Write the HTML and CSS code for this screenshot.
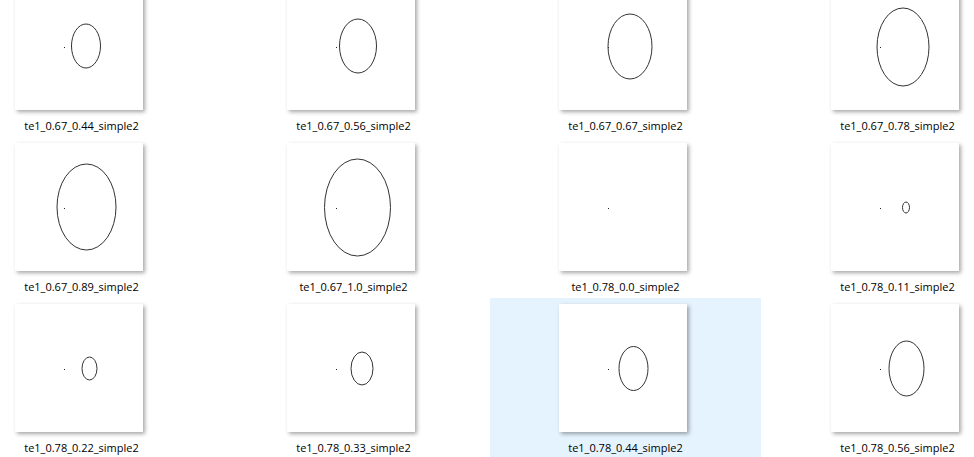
FILE: index.html
```html
<!DOCTYPE html>
<html>
<head>
	<title>simple2</title>
	<link rel="stylesheet" href="styles.css">
</head>
<body>
	<div class="view">
		<div class="grid">
			<div class="tile">
				<svg class="thumb" viewBox="0 0 128 128"><rect class="dot" x="49" y="65" width="1" height="1"/><ellipse cx="71" cy="64" rx="14.5" ry="22"/></svg>
				<div class="name">te1_0.67_0.44_simple2</div>
			</div>
			<div class="tile">
				<svg class="thumb" viewBox="0 0 128 128"><rect class="dot" x="49" y="65" width="1" height="1"/><ellipse cx="71" cy="64" rx="18.5" ry="27"/></svg>
				<div class="name">te1_0.67_0.56_simple2</div>
			</div>
			<div class="tile">
				<svg class="thumb" viewBox="0 0 128 128"><rect class="dot" x="49" y="65" width="1" height="1"/><ellipse cx="71" cy="64.5" rx="22" ry="32.5"/></svg>
				<div class="name">te1_0.67_0.67_simple2</div>
			</div>
			<div class="tile">
				<svg class="thumb" viewBox="0 0 128 128"><rect class="dot" x="49" y="65" width="1" height="1"/><ellipse cx="72" cy="65" rx="26" ry="39"/></svg>
				<div class="name">te1_0.67_0.78_simple2</div>
			</div>

			<div class="tile">
				<svg class="thumb" viewBox="0 0 128 128"><rect class="dot" x="49" y="65" width="1" height="1"/><ellipse cx="71.5" cy="64" rx="29.5" ry="43"/></svg>
				<div class="name">te1_0.67_0.89_simple2</div>
			</div>
			<div class="tile">
				<svg class="thumb" viewBox="0 0 128 128"><rect class="dot" x="49" y="65" width="1" height="1"/><ellipse cx="70.5" cy="64.5" rx="33" ry="48.5"/></svg>
				<div class="name">te1_0.67_1.0_simple2</div>
			</div>
			<div class="tile">
				<svg class="thumb" viewBox="0 0 128 128"><rect class="dot" x="49" y="65" width="1" height="1"/></svg>
				<div class="name">te1_0.78_0.0_simple2</div>
			</div>
			<div class="tile">
				<svg class="thumb" viewBox="0 0 128 128"><rect class="dot" x="49" y="65" width="1" height="1"/><ellipse cx="75" cy="64.5" rx="3.5" ry="5.5"/></svg>
				<div class="name">te1_0.78_0.11_simple2</div>
			</div>

			<div class="tile">
				<svg class="thumb" viewBox="0 0 128 128"><rect class="dot" x="49" y="65" width="1" height="1"/><ellipse cx="74.5" cy="64.5" rx="7.5" ry="11.5"/></svg>
				<div class="name">te1_0.78_0.22_simple2</div>
			</div>
			<div class="tile">
				<svg class="thumb" viewBox="0 0 128 128"><rect class="dot" x="49" y="65" width="1" height="1"/><ellipse cx="75" cy="64.5" rx="11" ry="16.5"/></svg>
				<div class="name">te1_0.78_0.33_simple2</div>
			</div>
			<div class="tile selected">
				<svg class="thumb" viewBox="0 0 128 128"><rect class="dot" x="49" y="65" width="1" height="1"/><ellipse cx="74.5" cy="64.5" rx="14.5" ry="22"/></svg>
				<div class="name">te1_0.78_0.44_simple2</div>
			</div>
			<div class="tile">
				<svg class="thumb" viewBox="0 0 128 128"><rect class="dot" x="49" y="65" width="1" height="1"/><ellipse cx="75.5" cy="64.5" rx="17.5" ry="27.5"/></svg>
				<div class="name">te1_0.78_0.56_simple2</div>
			</div>
		</div>
	</div>
</body>
</html>
```

FILE: styles.css
```css
html, body {
	margin: 0;
	height: 100%;
	background-color: #fff;
	overflow: hidden;
}
body {
	font-family: "Open Sans", "Noto Sans", sans-serif;
	font-size: 11px;
	color: #000;
}
.view {
	height: 100%;
	overflow: hidden;
}
.grid {
	display: grid;
	grid-template-columns: repeat(4, 271px);
	grid-auto-rows: 160px;
	column-gap: 1px;
	row-gap: 1px;
	margin-left: -54px;
	margin-top: -24px;
}
.tile {
	display: flex;
	flex-direction: column;
	align-items: center;
	padding-top: 6px;
	box-sizing: border-box;
}
.tile.selected {
	background-color: #e5f3ff;
}
.thumb {
	width: 128px;
	height: 128px;
	background-color: #fff;
	margin-right: 5px;
	box-shadow: 2px 2px 4px rgba(0, 0, 0, 0.35);
	flex-shrink: 0;
}
.thumb ellipse {
	fill: none;
	stroke: #333;
	stroke-width: 1;
}
.thumb .dot {
	fill: #222;
}
.name {
	margin-top: 8px;
	line-height: 16px;
	white-space: nowrap;
}
```
